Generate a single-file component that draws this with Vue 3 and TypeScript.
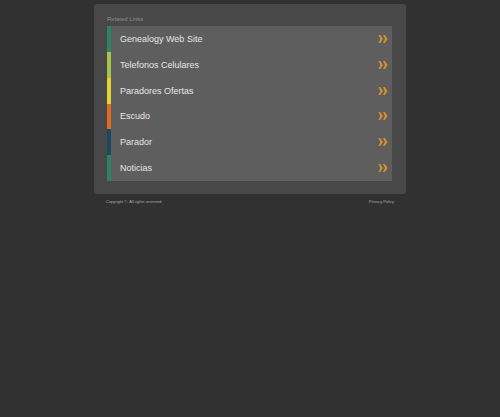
<script setup lang="ts">
interface LinkItem {
  label: string
  tone: string
}

const links: LinkItem[] = [
  { label: 'Genealogy Web Site', tone: 'green' },
  { label: 'Telefonos Celulares', tone: 'lime' },
  { label: 'Paradores Ofertas', tone: 'yellow' },
  { label: 'Escudo', tone: 'orange' },
  { label: 'Parador', tone: 'blue' },
  { label: 'Noticias', tone: 'green' },
]
</script>

<template>
  <div class="page">
    <main class="panel">
      <h1 class="title">Related Links</h1>
      <ul class="list">
        <li v-for="item in links" :key="item.label" class="item">
          <a href="#" class="link" :class="item.tone">
            <span>{{ item.label }}</span>
            <svg class="arrows" viewBox="0 0 10 10" aria-hidden="true">
              <path d="M0.5 1H2.2L5 5L2.2 9H0.5L2.4 5Z M5 1H6.7L9.5 5L6.7 9H5L6.9 5Z" />
            </svg>
          </a>
        </li>
      </ul>
    </main>
    <footer class="footer">
      <span>Copyright ©. All rights reserved.</span>
      <a href="#" class="policy">Privacy Policy</a>
    </footer>
  </div>
</template>

<style>
body {
  margin: 0;
  background: #313131;
}
</style>

<style scoped>
.page {
  box-sizing: border-box;
  width: 62.4%;
  margin: 0 auto;
  padding-top: 4px;
  font-family: "Liberation Sans", Arial, sans-serif;
}
.panel {
  padding: 11px 14px 13px 13px;
  border-radius: 3px;
  background: #484848;
}
.title {
  margin: 0 0 3px;
  font-size: 6px;
  line-height: 8px;
  font-weight: 400;
  color: #8c8c8c;
}
.list {
  display: grid;
  grid-auto-rows: 1fr;
  min-height: 155px;
  margin: 0;
  padding: 0;
  list-style: none;
  background: #5e5e5e;
}
.item {
  display: grid;
}
.link {
  display: flex;
  align-items: center;
  justify-content: space-between;
  padding: 0 4px 0 9px;
  border-left: 4px solid;
  font-size: 9px;
  line-height: 12px;
  text-decoration: none;
}
.link span {
  color: #e6e6e6;
}
.green {
  border-color: #2c8263;
}
.lime {
  border-color: #a5c648;
}
.yellow {
  border-color: #e5d32f;
}
.orange {
  border-color: #e26c1b;
}
.blue {
  border-color: #1c4962;
}
.arrows {
  width: 10px;
  height: 10px;
  fill: #d9922a;
}
.footer {
  display: flex;
  justify-content: space-between;
  padding: 5px 12px 0;
  font-size: 4px;
  line-height: 6px;
  color: #aaa;
}
.policy {
  color: #aaa;
  text-decoration: none;
}
</style>
